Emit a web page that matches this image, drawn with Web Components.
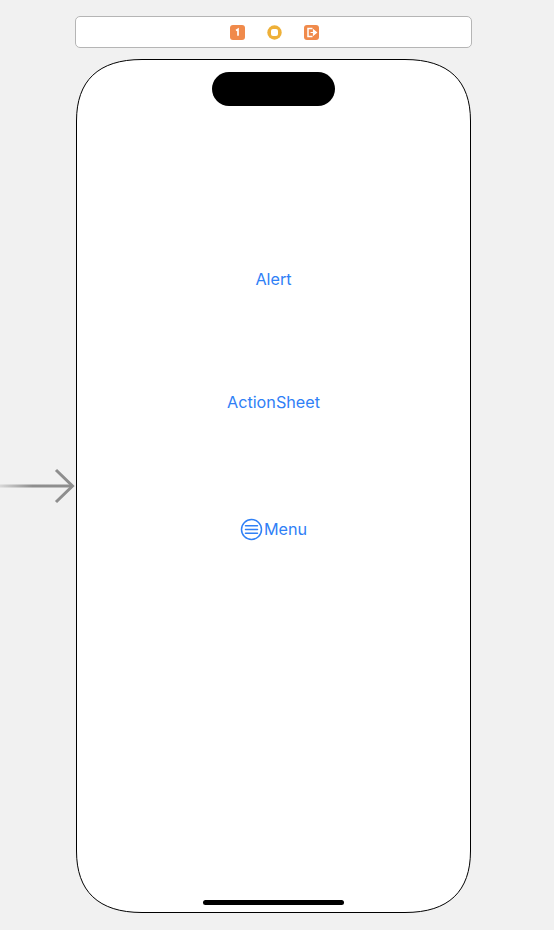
<!DOCTYPE html>
<html>
<head>
<meta charset="utf-8">
<title>Storyboard</title>
<style>
  html, body { margin: 0; height: 100%; background: #f1f1f1; overflow: hidden; }
</style>
</head>
<body>
<story-canvas>
  <scene-dock slot="dock"></scene-dock>
  <entry-arrow slot="arrow"></entry-arrow>
  <phone-frame slot="phone">
    <link-button style="--top: 161px">Alert</link-button>
    <link-button style="--top: 99px">ActionSheet</link-button>
    <link-button style="--top: 103px">
      <svg slot="icon" width="23" height="23" viewBox="0 0 23 23" fill="none" stroke="#2f80f6">
        <circle cx="11.5" cy="11.5" r="10" stroke-width="1.5"/>
        <path d="M5.5 7.7h12M5.5 11.5h12M5.5 15.3h12" stroke-width="1.5" stroke-linecap="round"/>
      </svg>Menu</link-button>
  </phone-frame>
</story-canvas>
<script>
// Page layout: dock on top, then arrow + phone side by side.
customElements.define('story-canvas', class extends HTMLElement {
  constructor () {
    super()
    this.attachShadow({ mode: 'open' })
    this.shadowRoot.innerHTML = `
<style>
  :host { display: block; padding-top: 16px; }
  #row { display: flex; align-items: center; margin-top: 11px; }
</style>
<slot name="dock"></slot>
<div id="row"><slot name="arrow"></slot><slot name="phone"></slot></div>`
  }
})

customElements.define('scene-dock', class extends HTMLElement {
  constructor () {
    super()
    this.attachShadow({ mode: 'open' })
    this.shadowRoot.innerHTML = `
<style>
  :host {
    display: flex; box-sizing: border-box; width: 397px; height: 32px; margin-left: 75px;
    align-items: center; justify-content: center; gap: 22px; padding-left: 2px;
    background: #fff; border: 1px solid #b5b5b5; border-radius: 5px;
  }
  svg { display: block; }
</style>
<svg width="15" height="15" viewBox="0 0 15 15">
  <rect width="15" height="15" rx="3" fill="#f08a4b"/>
  <path d="M6 5.4 8 4.2v6.6" fill="none" stroke="#fff" stroke-width="1.7"/>
</svg>
<svg width="15" height="15" viewBox="0 0 15 15">
  <circle cx="7.5" cy="7.5" r="7.2" fill="#eeb038"/>
  <rect x="4" y="4" width="7" height="7" rx="2" fill="#fff"/>
</svg>
<svg width="15" height="15" viewBox="0 0 15 15">
  <rect width="15" height="15" rx="3" fill="#f08a4b"/>
  <path d="M8.5 3.5H4v8h4.5" fill="none" stroke="#fff" stroke-width="1.5"/>
  <path d="M6.5 7.5h4M9.5 5v5l3-2.5z" fill="#fff" stroke="#fff" stroke-width="1.2"/>
</svg>`
  }
})

customElements.define('entry-arrow', class extends HTMLElement {
  constructor () {
    super()
    this.attachShadow({ mode: 'open' })
    this.shadowRoot.innerHTML = `
<style>
  :host { display: block; width: 76px; height: 36px; flex: none; }
  svg { display: block; }
</style>
<svg width="76" height="36" viewBox="0 0 76 36" fill="none">
  <defs>
    <linearGradient id="fade" x1="0" y1="0" x2="1" y2="0">
      <stop offset="0" stop-color="#8e8e8e" stop-opacity="0.25"/>
      <stop offset="0.45" stop-color="#8e8e8e"/>
    </linearGradient>
  </defs>
  <rect x="0" y="16.5" width="72" height="3" fill="url(#fade)"/>
  <path d="M56 2 72.5 18 56 34" stroke="#8e8e8e" stroke-width="3"/>
</svg>`
  }
})

// The body outline is a continuous-corner curve, which border-radius can't do,
// so it is an svg lying behind the content.
customElements.define('phone-frame', class extends HTMLElement {
  constructor () {
    super()
    this.attachShadow({ mode: 'open' })
    this.shadowRoot.innerHTML = `
<style>
  :host {
    display: flex; flex-direction: column; align-items: center; box-sizing: border-box;
    position: relative; isolation: isolate; width: 395px; height: 854px; padding-top: 13px;
  }
  #body { position: absolute; inset: 0; z-index: -1; display: block; }
  #island { width: 123px; height: 34px; flex: none; background: #000; border-radius: 17px; }
  #home { width: 141px; height: 5px; flex: none; margin-top: auto; margin-bottom: 8px; background: #000; border-radius: 3px; }
</style>
<svg id="body" width="395" height="854" viewBox="0 0 395 854">
  <path fill="#fff" stroke="#000" d="M66 .5H329C373 .5 394.5 22 394.5 62V792C394.5 832 373 853.5 329 853.5H66C22 853.5 .5 832 .5 792V62C.5 22 22 .5 66 .5Z"/>
</svg>
<div id="island"></div>
<slot></slot>
<div id="home"></div>`
  }
})

customElements.define('link-button', class extends HTMLElement {
  constructor () {
    super()
    this.attachShadow({ mode: 'open' })
    this.shadowRoot.innerHTML = `
<style>
  :host {
    display: flex; align-items: center; justify-content: center; height: 24px;
    margin-top: var(--top, 0);
    font: 380 16.2px/24px Inter, "Liberation Sans", sans-serif; color: #2f80f6;
  }
  ::slotted(svg) { display: block; margin-right: 1px; }
</style>
<slot name="icon"></slot><slot></slot>`
  }
})
</script>
</body>
</html>
